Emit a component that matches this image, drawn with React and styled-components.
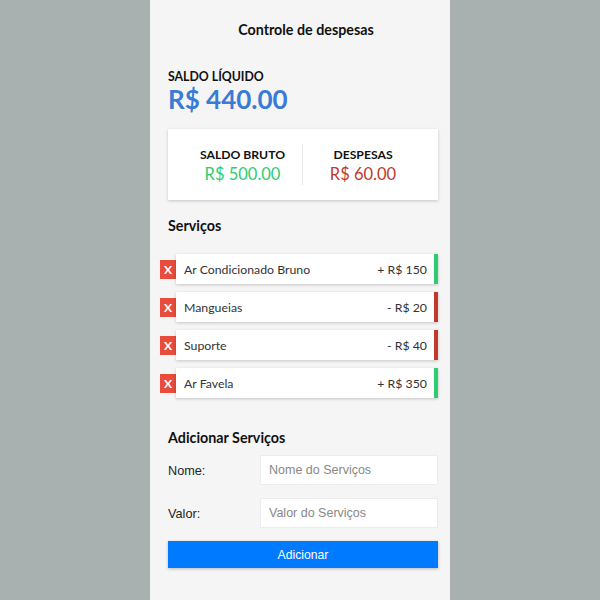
import React from "react";
import { styled, createGlobalStyle } from "styled-components";

const servicos = [
  { nome: "Ar Condicionado Bruno", valor: 150, tipo: "entrada" },
  { nome: "Mangueias", valor: 20, tipo: "saida" },
  { nome: "Suporte", valor: 40, tipo: "saida" },
  { nome: "Ar Favela", valor: 350, tipo: "entrada" },
];

const App = () => {
  return (
    <>
      <GlobalStyle />
      <Pagina>
        <Container>
          <Titulo>Controle de despesas</Titulo>

          <SaldoLabel>Saldo Líquido</SaldoLabel>
          <SaldoValor>R$ 440.00</SaldoValor>

          <Resumo>
            <ResumoColuna>
              <ResumoTitulo>Saldo Bruto</ResumoTitulo>
              <ResumoValor cor="#2ecc71">R$ 500.00</ResumoValor>
            </ResumoColuna>
            <ResumoColuna>
              <ResumoTitulo>Despesas</ResumoTitulo>
              <ResumoValor cor="#c0392b">R$ 60.00</ResumoValor>
            </ResumoColuna>
          </Resumo>

          <Subtitulo>Serviços</Subtitulo>

          <Lista>
            {servicos.map((s) => (
              <Item key={s.nome}>
                <Remover>x</Remover>
                <ItemCorpo tipo={s.tipo}>
                  <span>{s.nome}</span>
                  <span>
                    {s.tipo === "entrada" ? "+" : "-"} R$ {s.valor}
                  </span>
                </ItemCorpo>
              </Item>
            ))}
          </Lista>

          <SubtituloForm>Adicionar Serviços</SubtituloForm>

          <Form onSubmit={(e) => e.preventDefault()}>
            <Campo>
              <Label>Nome:</Label>
              <Input type="text" placeholder="Nome do Serviços" />
            </Campo>
            <Campo>
              <Label>Valor:</Label>
              <Input type="text" placeholder="Valor do Serviços" />
            </Campo>
            <Botao type="submit">Adicionar</Botao>
          </Form>
        </Container>
      </Pagina>
    </>
  );
};

export default App;

const GlobalStyle = createGlobalStyle`
  * {
    box-sizing: border-box;
  }
  body {
    margin: 0;
    background: #a8b0b0;
    font-family: Lato, "Liberation Sans", sans-serif;
  }
`;

const Pagina = styled.div`
  width: 600px;
  height: 600px;
  display: flex;
  justify-content: center;
`;

const Container = styled.div`
  width: 300px;
  height: 100%;
  background: #f5f5f5;
  padding: 20px 12px 0 18px;
  color: #111;
`;

const Titulo = styled.h2`
  margin: 0;
  font-size: 14.3px;
  font-weight: 700;
  line-height: 20px;
  text-align: center;
  padding-left: 6px;
`;

const SaldoLabel = styled.h4`
  margin: 30px 0 0;
  font-size: 12.3px;
  font-weight: 700;
  line-height: 14px;
  text-transform: uppercase;
`;

const SaldoValor = styled.div`
  font-size: 26px;
  font-weight: 700;
  line-height: 30px;
  color: #3a7bd5;
`;

const Resumo = styled.div`
  margin-top: 15px;
  height: 71px;
  background: #fff;
  box-shadow: 0 1px 3px rgba(0, 0, 0, 0.2);
  display: flex;
  justify-content: center;
  align-items: center;
  padding: 15px 0;
`;

const ResumoColuna = styled.div`
  width: 120px;
  height: 100%;
  display: flex;
  flex-direction: column;
  justify-content: center;
  align-items: center;

  &:first-child {
    border-right: 1px solid #e6e6e6;
  }
`;

const ResumoTitulo = styled.h4`
  margin: 0;
  font-size: 12.2px;
  font-weight: 700;
  line-height: 18px;
  text-transform: uppercase;
`;

const ResumoValor = styled.p`
  margin: 0;
  font-size: 16.5px;
  line-height: 20px;
  color: ${(props) => props.cor};
`;

const Subtitulo = styled.h3`
  margin: 16px 0 0;
  font-size: 14.3px;
  font-weight: 700;
  line-height: 20px;
`;

const SubtituloForm = styled(Subtitulo)`
  margin-top: 30px;
`;

const Lista = styled.ul`
  list-style: none;
  margin: 18px 0 0;
  padding: 0;
  display: flex;
  flex-direction: column;
  gap: 8px;
`;

const Item = styled.li`
  display: flex;
  align-items: center;
  margin-left: -8px;
`;

const Remover = styled.button`
  width: 16px;
  height: 19px;
  padding: 0;
  border: none;
  background: #e74c3c;
  color: #fff;
  font-family: Lato, sans-serif;
  font-size: 12px;
  font-weight: 700;
  line-height: 19px;
  text-transform: uppercase;
  cursor: pointer;
`;

const ItemCorpo = styled.div`
  flex: 1;
  height: 30px;
  background: #fff;
  box-shadow: 0 1px 3px rgba(0, 0, 0, 0.2);
  border-right: 4px solid
    ${(props) => (props.tipo === "entrada" ? "#2ecc71" : "#c0392b")};
  display: flex;
  align-items: center;
  justify-content: space-between;
  padding: 0 7px 0 8px;
  font-size: 12.3px;
  color: #333;
`;

const Form = styled.form`
  margin-top: 7px;
  display: flex;
  flex-direction: column;
`;

const Campo = styled.div`
  display: flex;
  align-items: center;
  justify-content: space-between;
  margin-bottom: 13px;
`;

const Label = styled.label`
  font-family: "Liberation Sans", Arial, sans-serif;
  font-size: 12.7px;
  color: #222;
  padding-top: 2px;
`;

const Input = styled.input`
  width: 178px;
  height: 30px;
  border: 1px solid #ececec;
  background: #fff;
  padding: 0 8px;
  font-family: "Liberation Sans", Arial, sans-serif;
  font-size: 12.5px;
  outline: none;

  &::placeholder {
    color: #888;
  }
`;

const Botao = styled.button`
  height: 27px;
  border: none;
  background: #007bff;
  color: #fff;
  font-family: "Liberation Sans", Arial, sans-serif;
  font-size: 12.2px;
  box-shadow: 0 1px 3px rgba(0, 0, 0, 0.25);
  cursor: pointer;
`;
